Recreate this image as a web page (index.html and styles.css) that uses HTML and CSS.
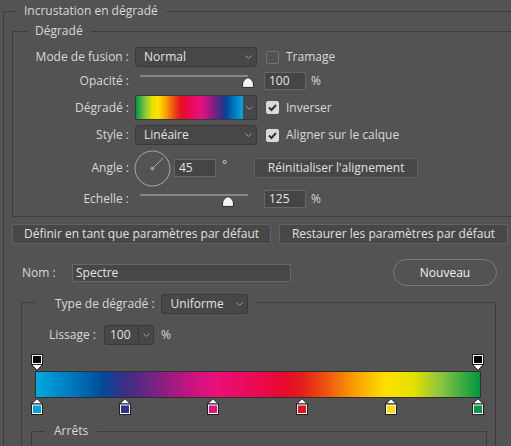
FILE: index.html
```html
<!DOCTYPE html>
<html lang="fr">
<head>
<meta charset="utf-8">
<title>Incrustation en dégradé</title>
<link rel="stylesheet" href="styles.css">
</head>
<body>
<fieldset class="outer">
  <legend class="outer-legend">Incrustation en dégradé</legend>
  <fieldset class="inner">
    <legend class="inner-legend">Dégradé</legend>
    <div class="row r-mode">
      <span class="lbl">Mode de fusion :</span>
      <div class="select ctrl"><span class="val">Normal</span><svg class="chev" width="7" height="4" viewBox="0 0 7 4"><polyline points="0.5,0.5 3.5,3.5 6.5,0.5" fill="none" stroke="#a0a0a0" stroke-width="1"/></svg></div>
      <div class="check"><span class="box"></span><span>Tramage</span></div>
    </div>
    <div class="row r-opac">
      <span class="lbl">Opacité :</span>
      <div class="slider ctrl">
        <div class="track"></div>
        <svg class="thumb" style="left:107px" width="12" height="11" viewBox="0 0 12 11"><path d="M6 0.6 C8.5 1.4 10.6 3.4 11.4 6 L11.4 10.4 L0.6 10.4 L0.6 6 C1.4 3.4 3.5 1.4 6 0.6 Z" fill="#f4f4f4" stroke="#2a2a2a" stroke-width="1"/></svg>
      </div>
      <span class="num">100</span><span class="unit">%</span>
    </div>
    <div class="row r-grad">
      <span class="lbl">Dégradé :</span>
      <div class="grad-select ctrl">
        <div class="grad-preview"></div>
        <div class="grad-arrow"><svg class="chev" width="7" height="4" viewBox="0 0 7 4"><polyline points="0.5,0.5 3.5,3.5 6.5,0.5" fill="none" stroke="#a0a0a0" stroke-width="1"/></svg></div>
      </div>
      <div class="check"><span class="box on"><svg width="13" height="13" viewBox="0 0 13 13"><polyline points="3,6.5 5.5,9 10,4" fill="none" stroke="#333" stroke-width="2"/></svg></span><span>Inverser</span></div>
    </div>
    <div class="row r-style">
      <span class="lbl">Style :</span>
      <div class="select ctrl"><span class="val">Linéaire</span><svg class="chev" width="7" height="4" viewBox="0 0 7 4"><polyline points="0.5,0.5 3.5,3.5 6.5,0.5" fill="none" stroke="#a0a0a0" stroke-width="1"/></svg></div>
      <div class="check"><span class="box on"><svg width="13" height="13" viewBox="0 0 13 13"><polyline points="3,6.5 5.5,9 10,4" fill="none" stroke="#333" stroke-width="2"/></svg></span><span>Aligner sur le calque</span></div>
    </div>
    <div class="row r-angle">
      <span class="lbl">Angle :</span>
      <svg class="dial" width="37" height="37" viewBox="0 0 37 37">
        <circle cx="18.5" cy="18.5" r="17.5" fill="none" stroke="#a8a8a8" stroke-width="1"/>
        <line x1="18.5" y1="18.5" x2="29" y2="8" stroke="#a8a8a8" stroke-width="1"/>
        <circle cx="18.5" cy="18.5" r="2" fill="#9a9a9a"/>
      </svg>
      <span class="num angle-num">45</span><span class="deg">°</span>
      <div class="btn reset-btn">Réinitialiser l'alignement</div>
    </div>
    <div class="row r-scale">
      <span class="lbl">Echelle :</span>
      <div class="slider ctrl">
        <div class="track"></div>
        <svg class="thumb" style="left:87px" width="12" height="11" viewBox="0 0 12 11"><path d="M6 0.6 C8.5 1.4 10.6 3.4 11.4 6 L11.4 10.4 L0.6 10.4 L0.6 6 C1.4 3.4 3.5 1.4 6 0.6 Z" fill="#f4f4f4" stroke="#2a2a2a" stroke-width="1"/></svg>
      </div>
      <span class="num">125</span><span class="unit">%</span>
    </div>
  </fieldset>

  <div class="btns">
    <div class="btn btn-def">Définir en tant que paramètres par défaut</div>
    <div class="btn btn-rest">Restaurer les paramètres par défaut</div>
  </div>

  <div class="name-row">
    <span class="name-lbl">Nom :</span>
    <span class="name-input">Spectre</span>
    <div class="pill">Nouveau</div>
  </div>

  <fieldset class="type-set">
    <legend class="type-legend"><span class="type-inner"><span class="type-lbl">Type de dégradé :</span><span class="select type-select"><span class="val">Uniforme</span><svg class="chev" width="7" height="4" viewBox="0 0 7 4"><polyline points="0.5,0.5 3.5,3.5 6.5,0.5" fill="none" stroke="#a0a0a0" stroke-width="1"/></svg></span></span></legend>
    <div class="smooth-row">
      <span class="smooth-lbl">Lissage :</span>
      <div class="combo"><span class="combo-val">100</span><span class="combo-arrow"><svg class="chev" width="7" height="4" viewBox="0 0 7 4"><polyline points="0.5,0.5 3.5,3.5 6.5,0.5" fill="none" stroke="#a0a0a0" stroke-width="1"/></svg></span></div>
      <span class="unit smooth-unit">%</span>
    </div>

    <div class="editor">
      <div class="stops op-stops">
        <svg class="stop" style="left:0px" width="12" height="17" viewBox="0 0 12 17"><rect x="0.5" y="0.5" width="11" height="10" fill="#fff" stroke="#1e1e1e"/><rect x="2" y="2" width="8" height="7" fill="#000"/><polygon points="0.5,10.5 11.5,10.5 6,16.3" fill="#fff" stroke="#1e1e1e" stroke-width="1"/></svg>
        <svg class="stop" style="left:441px" width="12" height="17" viewBox="0 0 12 17"><rect x="0.5" y="0.5" width="11" height="10" fill="#fff" stroke="#1e1e1e"/><rect x="2" y="2" width="8" height="7" fill="#000"/><polygon points="0.5,10.5 11.5,10.5 6,16.3" fill="#fff" stroke="#1e1e1e" stroke-width="1"/></svg>
      </div>
      <div class="bar"></div>
      <div class="stops col-stops">
        <svg class="stop" style="left:0px" width="12" height="17" viewBox="0 0 12 17"><polygon points="6,0.7 11.5,6 0.5,6" fill="#fff" stroke="#1e1e1e"/><rect x="0.5" y="6" width="11" height="10.5" fill="#fff" stroke="#1e1e1e"/><rect x="2" y="7.5" width="8" height="7.5" fill="#00a0e3"/></svg>
        <svg class="stop" style="left:88px" width="12" height="17" viewBox="0 0 12 17"><polygon points="6,0.7 11.5,6 0.5,6" fill="#fff" stroke="#1e1e1e"/><rect x="0.5" y="6" width="11" height="10.5" fill="#fff" stroke="#1e1e1e"/><rect x="2" y="7.5" width="8" height="7.5" fill="#2e3192"/></svg>
        <svg class="stop" style="left:176px" width="12" height="17" viewBox="0 0 12 17"><polygon points="6,0.7 11.5,6 0.5,6" fill="#fff" stroke="#1e1e1e"/><rect x="0.5" y="6" width="11" height="10.5" fill="#fff" stroke="#1e1e1e"/><rect x="2" y="7.5" width="8" height="7.5" fill="#e6127e"/></svg>
        <svg class="stop" style="left:265px" width="12" height="17" viewBox="0 0 12 17"><polygon points="6,0.7 11.5,6 0.5,6" fill="#fff" stroke="#1e1e1e"/><rect x="0.5" y="6" width="11" height="10.5" fill="#fff" stroke="#1e1e1e"/><rect x="2" y="7.5" width="8" height="7.5" fill="#e3131b"/></svg>
        <svg class="stop" style="left:354px" width="12" height="17" viewBox="0 0 12 17"><polygon points="6,0.7 11.5,6 0.5,6" fill="#fff" stroke="#1e1e1e"/><rect x="0.5" y="6" width="11" height="10.5" fill="#fff" stroke="#1e1e1e"/><rect x="2" y="7.5" width="8" height="7.5" fill="#ffe100"/></svg>
        <svg class="stop" style="left:441px" width="12" height="17" viewBox="0 0 12 17"><polygon points="6,0.7 11.5,6 0.5,6" fill="#fff" stroke="#1e1e1e"/><rect x="0.5" y="6" width="11" height="10.5" fill="#fff" stroke="#1e1e1e"/><rect x="2" y="7.5" width="8" height="7.5" fill="#009a44"/></svg>
      </div>
    </div>

    <fieldset class="stops-set">
      <legend class="stops-legend">Arrêts</legend>
    </fieldset>
  </fieldset>
</fieldset>
</body>
</html>
```

FILE: styles.css
```css
* { box-sizing: border-box; }
html, body { margin: 0; padding: 0; }
body {
  width: 511px;
  height: 446px;
  overflow: hidden;
  background: #535353;
  color: #d8d8d8;
  font-family: "Open Sans", "Noto Sans", sans-serif;
  font-size: 12px;
  line-height: 16px;
}
fieldset {
  margin: 0;
  padding: 0;
  min-width: 0;
  border: 1px solid #3d3d3d;
}
legend { padding: 0 8px; line-height: 16px; }

.outer { margin: 3px 0 0 3px; width: 509px; height: 444px; overflow: hidden; }
.outer-legend { margin-left: 12px; }

.inner { margin: 4px 0 0 8px; width: 500px; padding: 8px 0 8px 0; }
.inner-legend { margin-left: 14px; }

.row { display: flex; align-items: center; }
.r-mode { height: 20px; }
.r-opac { height: 18px; margin-top: 5px; align-items: flex-start; }
.r-grad { height: 25px; margin-top: 5px; }
.r-style { height: 20px; margin-top: 5px; }
.r-angle { height: 36px; margin-top: 5px; }
.r-scale { height: 18px; margin-top: 4px; align-items: flex-start; }
.r-opac .lbl, .r-scale .lbl { line-height: 18px; }

.lbl { width: 116px; margin-right: 6px; text-align: right; flex: none; }
.ctrl { width: 122px; flex: none; }

.select {
  height: 20px;
  border: 1px solid #393939;
  border-radius: 3px;
  background: #474747;
  display: flex;
  align-items: center;
  justify-content: space-between;
  padding: 0 4px 0 8px;
  color: #e2e2e2;
}
.chev { display: block; }

.check { display: flex; align-items: center; margin-left: 9px; }
.box {
  width: 13px; height: 13px;
  border: 1px solid #737373;
  border-radius: 2px;
  margin-right: 7px;
  flex: none;
}
.box.on { background: #d9d9d9; border-color: #d9d9d9; }
.box.on svg { display: block; margin: -1px 0 0 -1px; }

.slider { position: relative; height: 18px; }
.track {
  position: absolute;
  left: 5px; top: 3px;
  width: 108px; height: 2px;
  background: #858585;
}
.r-scale .track { top: 4px; }
.thumb { position: absolute; top: 5px; }
.r-scale .thumb { top: 6px; }

.num {
  width: 42px; height: 18px;
  border: 1px solid #666;
  background: #454545;
  padding-left: 4px;
  line-height: 16px;
  color: #e4e4e4;
  margin-left: 7px;
  flex: none;
}
.unit { margin-left: 5px; line-height: 18px; }

.grad-select {
  height: 25px;
  display: flex;
  border: 1px solid #393939;
  background: #474747;
}
.grad-preview {
  width: 107px;
  background: linear-gradient(to left, #00a9e2 0%, #0060aa 12%, #014a97 15%, #3b2d85 20%, #7b2282 27%, #c0147f 34%, #e8117c 40%, #eb0a5a 48%, #e60a2e 56%, #e41e19 60%, #f15a0e 66%, #f9a100 72%, #ffe100 79%, #e3e000 85%, #8cc63f 91%, #00983f 100%);
}
.grad-arrow { flex: 1; display: flex; align-items: center; justify-content: center; }

.dial { display: block; margin-left: -1px; flex: none; }
.angle-num { margin-left: 3px; }
.deg { margin-left: 6px; margin-top: -6px; }

.btn {
  height: 20px;
  border: 1px solid #626262;
  border-radius: 2px;
  background: #474747;
  display: flex;
  align-items: center;
  justify-content: center;
  color: #e0e0e0;
  white-space: nowrap;
}
.reset-btn { width: 164px; margin-left: 27px; }

.btns { display: flex; margin: 7px 0 0 8px; }
.btn-def { width: 259px; }
.btn-rest { width: 229px; margin-left: 8px; }

.name-row { display: flex; align-items: center; height: 27px; margin-top: 15px; padding-left: 18px; }
.name-lbl { width: 50px; }
.name-input {
  width: 219px; height: 18px;
  border: 1px solid #666;
  background: #474747;
  padding-left: 3px;
  color: #e4e4e4;
}
.pill {
  width: 104px; height: 27px;
  margin-left: 102px;
  border: 1px solid #7a7a7a;
  border-radius: 14px;
  display: flex; align-items: center; justify-content: center;
  color: #f2f2f2;
}

.type-set { margin: 8px 0 0 17px; width: 475px; height: 160px; }
.type-legend { margin-left: 13px; padding: 0 7px 0 20px; height: 16px; }
.type-inner { display: flex; align-items: center; height: 20px; }
.type-lbl { line-height: 20px; }
.type-select { width: 87px; margin-left: 6px; padding-left: 9px; }

.smooth-row { display: flex; align-items: center; height: 20px; margin-top: 15px; padding-left: 27px; }
.smooth-lbl { width: 55px; }
.combo {
  width: 50px; height: 20px;
  display: flex;
  border: 1px solid #393939;
  border-radius: 3px;
  background: #474747;
  color: #e2e2e2;
}
.combo-val { width: 34px; padding-left: 5px; line-height: 18px; border-right: 1px solid #393939; }
.combo-arrow { flex: 1; display: flex; align-items: center; justify-content: center; }
.smooth-unit { margin-left: 7px; }

.editor { margin: 9px 0 0 9px; width: 454px; }
.stops { position: relative; height: 17px; }
.stop { position: absolute; top: 0; display: block; }
.bar {
  height: 27px;
  margin-left: 4px;
  width: 446px;
  border: 1px solid #2e2e2e;
  background: linear-gradient(to right, #00a9e2 0%, #0060aa 12%, #014a97 15%, #3b2d85 20%, #7b2282 27%, #c0147f 34%, #e8117c 40%, #eb0a5a 48%, #e60a2e 56%, #e41e19 60%, #f15a0e 66%, #f9a100 72%, #ffe100 79%, #e3e000 85%, #8cc63f 91%, #00983f 100%);
}

.stops-set { margin: 8px 0 0 9px; width: 456px; height: 40px; }
.stops-legend { margin-left: 13px; padding: 0 9px; }
```
